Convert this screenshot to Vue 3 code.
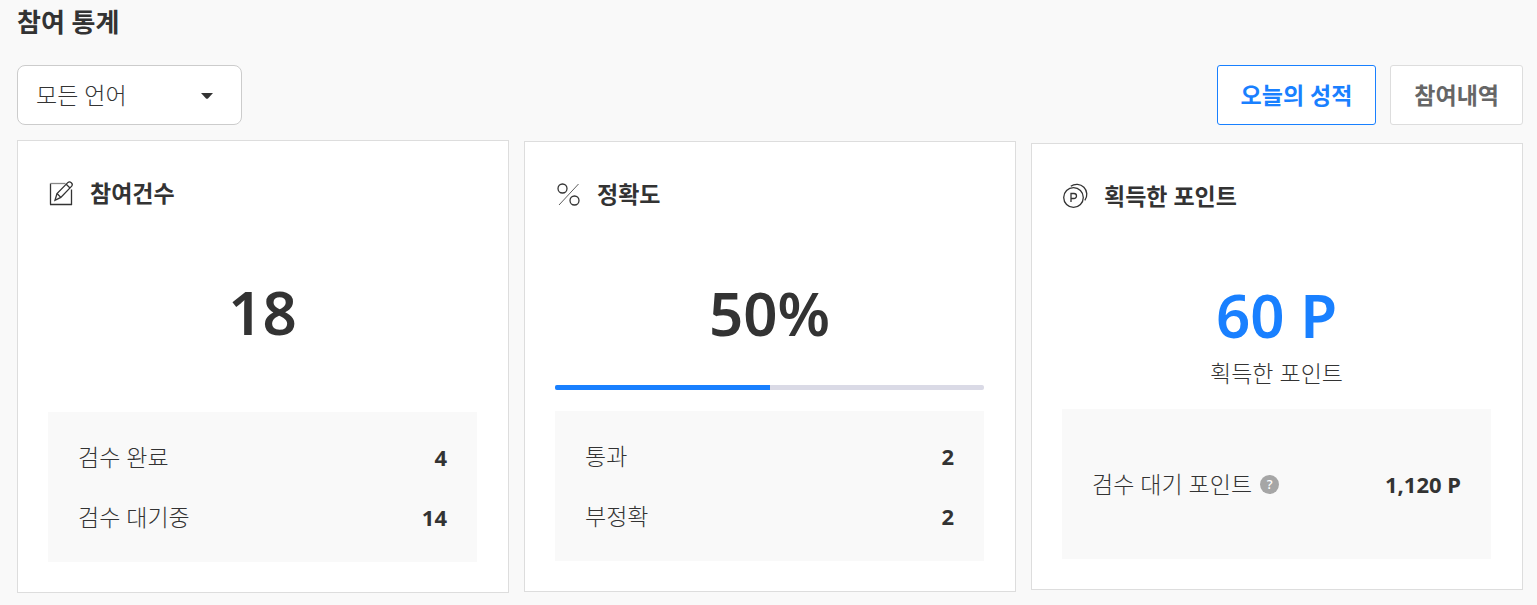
<template>
  <main class="stats-page">
    <h1 class="page-title">참여 통계</h1>

    <div class="toolbar">
      <div class="language-select">
        <select v-model="language" aria-label="언어">
          <option value="all">모든 언어</option>
        </select>
        <svg class="caret" width="12" height="6" viewBox="0 0 12 6" aria-hidden="true">
          <path d="M0 0h12L7 5.4q-1 .9-2 0z" fill="#333" />
        </svg>
      </div>

      <div class="tabs">
        <button
          v-for="tab in tabs"
          :key="tab.id"
          type="button"
          class="tab-btn"
          :class="{ active: tab.id === activeTab }"
          @click="activeTab = tab.id"
        >
          {{ tab.label }}
        </button>
      </div>
    </div>

    <div class="card-grid">
      <section v-for="card in cards" :key="card.id" class="card">
        <h2 class="card-title">
          <svg
            v-if="card.id === 'count'"
            class="card-icon"
            width="26"
            height="26"
            viewBox="0 0 26 26"
            fill="none"
            stroke="#333"
            stroke-width="1.3"
            aria-hidden="true"
          >
            <path d="M2.5 24.5V3.5M2 24.5h22M23.5 25V9.5" />
            <path d="M2.5 3.5H17.5" stroke="#888" />
            <path d="M7 20.3l2-6.8L20 2.4q1.5-1.2 3.3.3t.4 3.4L12.8 17.4z" />
            <path d="M9 13.5l3.8 3.9M18.2 4.2l3.8 3.8" />
          </svg>
          <svg
            v-else-if="card.id === 'accuracy'"
            class="card-icon"
            width="26"
            height="26"
            viewBox="0 0 26 26"
            fill="none"
            stroke="#333"
            stroke-width="1.3"
            aria-hidden="true"
          >
            <circle cx="7.5" cy="7.5" r="4.5" />
            <circle cx="19.5" cy="19.5" r="4.5" />
            <path d="M23.5 3L4 24" stroke-width="0.8" />
          </svg>
          <svg
            v-else
            class="card-icon"
            width="26"
            height="26"
            viewBox="0 0 26 26"
            fill="none"
            stroke="#333"
            stroke-width="1.3"
            aria-hidden="true"
          >
            <circle cx="11.5" cy="14.5" r="9.8" />
            <path d="M8.8 3.3A10 10 0 0 1 22.8 17.3" />
            <path d="M9 19V10.5h3a2.5 2.5 0 0 1 0 5H9" />
          </svg>
          {{ card.title }}
        </h2>

        <p class="card-value" :class="{ point: card.id === 'point' }">{{ card.value }}</p>
        <div v-if="card.percent" class="progress">
          <div class="progress-bar" :style="{ width: card.percent + '%' }"></div>
        </div>
        <p v-if="card.caption" class="card-caption">{{ card.caption }}</p>

        <dl class="detail" :class="{ spaced: card.id === 'count' }">
          <div v-for="row in card.rows" :key="row.label" class="detail-row">
            <dt>
              {{ row.label }}
              <button v-if="row.help" type="button" class="help-btn">?</button>
            </dt>
            <dd>{{ row.value }}</dd>
          </div>
        </dl>
      </section>
    </div>
  </main>
</template>

<script setup>
import { ref } from "vue";

const language = ref("all");
const activeTab = ref("today");

const tabs = [
  { id: "today", label: "오늘의 성적" },
  { id: "history", label: "참여내역" },
];

const cards = [
  {
    id: "count",
    title: "참여건수",
    value: "18",
    rows: [
      { label: "검수 완료", value: "4" },
      { label: "검수 대기중", value: "14" },
    ],
  },
  {
    id: "accuracy",
    title: "정확도",
    value: "50%",
    percent: 50,
    rows: [
      { label: "통과", value: "2" },
      { label: "부정확", value: "2" },
    ],
  },
  {
    id: "point",
    title: "획득한 포인트",
    value: "60 P",
    caption: "획득한 포인트",
    rows: [{ label: "검수 대기 포인트", value: "1,120 P", help: true }],
  },
];
</script>

<style>
body {
  margin: 0;
  background: #f9f9f9;
}
</style>

<style scoped>
.stats-page {
  padding: 0 14px 12px 17px;
  color: #333;
  font-family: "Noto Sans", "Noto Sans CJK KR", sans-serif;
  font-size: 23px;
  font-weight: 300;
}

.page-title {
  margin: 0 0 20px;
  font-size: 26px;
  font-weight: 700;
  line-height: 45px;
}

/* Toolbar */
.toolbar {
  display: flex;
  justify-content: space-between;
  margin-bottom: 15px;
}

.language-select {
  position: relative;
  width: 225px;
}

.language-select select {
  width: 100%;
  height: 60px;
  padding: 0 48px 0 18px;
  border: 1px solid #ccc;
  border-radius: 8px;
  background: #fff;
  color: inherit;
  font: inherit;
  appearance: none;
}

.caret {
  position: absolute;
  top: 28px;
  right: 29px;
  pointer-events: none;
}

.tabs {
  display: flex;
  gap: 14px;
}

.tab-btn {
  height: 60px;
  padding: 0 23px 2px;
  border: 1px solid #ddd;
  border-radius: 3px;
  background: #fff;
  color: #666;
  font: inherit;
  font-weight: 600;
  cursor: pointer;
}

.tab-btn.active {
  border-color: #1980ff;
  color: #1980ff;
}

/* Cards */
.card-grid {
  display: grid;
  grid-template-columns: repeat(3, 1fr);
  align-items: center;
  gap: 15px;
}

.card {
  padding: 30px 31px 30px 30px;
  border: 1px solid #ddd;
  background: #fff;
}

.card-title {
  display: flex;
  align-items: center;
  gap: 16px;
  margin: 0 0 62px;
  font-size: 23px;
  font-weight: 600;
  line-height: 44px;
}

.card-value {
  margin: 0;
  font-size: 60px;
  font-weight: 600;
  line-height: 70px;
  text-align: center;
}

.card-value.point {
  color: #1980ff;
}

.card-caption {
  margin: 8px 0 0;
  line-height: 30px;
  text-align: center;
}

.progress {
  height: 5px;
  margin-top: 37px;
  border-radius: 2px;
  background: #dadae6;
  overflow: hidden;
}

.progress-bar {
  height: 100%;
  background: #1980ff;
}

/* Detail box */
.detail {
  display: flex;
  flex-direction: column;
  justify-content: center;
  min-height: 150px;
  margin: 21px 0 0;
  padding: 0 30px;
  background: #f9f9f9;
}

.detail.spaced {
  margin-top: 65px;
}

.detail-row {
  display: flex;
  justify-content: space-between;
  line-height: 60px;
}

.detail-row dt {
  display: flex;
  align-items: center;
  gap: 8px;
}

.detail-row dd {
  margin: 0;
  font-size: 22px;
  font-weight: 700;
}

.help-btn {
  width: 19px;
  height: 19px;
  padding: 0;
  border: 0;
  border-radius: 50%;
  background: #a6a6a6;
  color: #fff;
  font: inherit;
  font-size: 13px;
  font-weight: 500;
  line-height: 19px;
  cursor: pointer;
}
</style>
